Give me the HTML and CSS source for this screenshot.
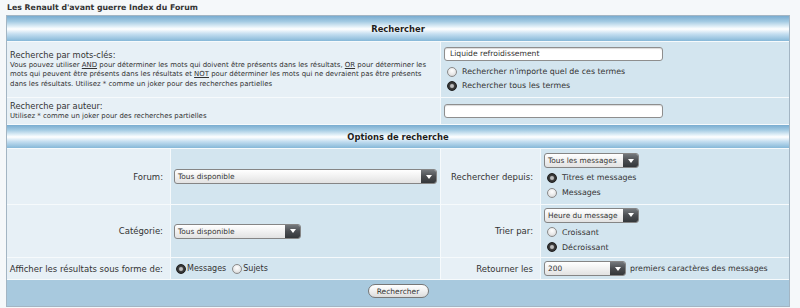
FILE: index.html
```html
<!DOCTYPE html>
<html lang="fr">
<head>
    <meta charset="UTF-8">
    <title>Rechercher</title>
    <link rel="stylesheet" href="styles.css">
</head>
<body>
    <div class="nav">Les Renault d'avant guerre Index du Forum</div>

    <div class="forumline">
        <div class="cat-head first">Rechercher</div>

        <div class="search-grid">
            <div class="cell-label row-keywords">
                <div class="label-title">Recherche par mots-clés:</div>
                <div class="gensmall">Vous pouvez utiliser <u>AND</u> pour déterminer les mots qui doivent être présents dans les résultats, <u>OR</u> pour déterminer les mots qui peuvent être présents dans les résultats et <u>NOT</u> pour déterminer les mots qui ne devraient pas être présents dans les résultats. Utilisez * comme un joker pour des recherches partielles</div>
            </div>
            <div class="cell-field stack">
                <input class="text-input" type="text" value="Liquide refroidissement">
                <label class="choice first-choice"><span class="radio"></span>Rechercher n'importe quel de ces termes</label>
                <label class="choice"><span class="radio on"></span>Rechercher tous les termes</label>
            </div>

            <div class="cell-label row-author">
                <div class="label-title">Recherche par auteur:</div>
                <div class="gensmall">Utilisez * comme un joker pour des recherches partielles</div>
            </div>
            <div class="cell-field">
                <input class="text-input" type="text" value="">
            </div>
        </div>

        <div class="cat-head">Options de recherche</div>

        <div class="options-grid">
            <div class="cell-label right row-forum">Forum:</div>
            <div class="cell-field">
                <span class="select select-forum"><span class="select-text">Tous disponible</span><span class="select-arrow"></span></span>
            </div>
            <div class="cell-label right">Rechercher depuis:</div>
            <div class="cell-field stack loose">
                <span class="select select-small"><span class="select-text">Tous les messages</span><span class="select-arrow"></span></span>
                <label class="choice first-choice"><span class="radio on"></span>Titres et messages</label>
                <label class="choice"><span class="radio"></span>Messages</label>
            </div>

            <div class="cell-label right row-cat">Catégorie:</div>
            <div class="cell-field">
                <span class="select select-cat"><span class="select-text">Tous disponible</span><span class="select-arrow"></span></span>
            </div>
            <div class="cell-label right">Trier par:</div>
            <div class="cell-field stack loose">
                <span class="select select-small"><span class="select-text">Heure du message</span><span class="select-arrow"></span></span>
                <label class="choice first-choice"><span class="radio"></span>Croissant</label>
                <label class="choice"><span class="radio on"></span>Décroissant</label>
            </div>

            <div class="cell-label right row-show">Afficher les résultats sous forme de:</div>
            <div class="cell-field inline">
                <label class="choice tight"><span class="radio on"></span>Messages</label>
                <label class="choice tight"><span class="radio"></span>Sujets</label>
            </div>
            <div class="cell-label right">Retourner les</div>
            <div class="cell-field inline">
                <span class="select select-chars"><span class="select-text">200</span><span class="select-arrow"></span></span>
                <span class="after-select">premiers caractères des messages</span>
            </div>
        </div>

        <div class="cat-bottom">
            <button class="btn" type="button">Rechercher</button>
        </div>
    </div>
</body>
</html>
```

FILE: styles.css
```css
* {
    margin: 0;
    padding: 0;
    box-sizing: border-box;
}

body {
    background: #f5f8fa;
    font-family: 'DejaVu Sans', Verdana, sans-serif;
    color: #333;
    padding: 0 10px 0 6px;
}

.nav {
    height: 15px;
    padding: 3px 0 0 1px;
    font-size: 7.8px;
    line-height: 9px;
    font-weight: bold;
    color: #333;
}

.forumline {
    border: 1px solid #a3b5c3;
    background: #f6fafc;
    display: flex;
    flex-direction: column;
    gap: 1px;
}

.cat-head {
    height: 23px;
    display: flex;
    align-items: center;
    justify-content: center;
    font-size: 8.4px;
    font-weight: bold;
    color: #1d1d1d;
    background: linear-gradient(to bottom, #79acd0 0%, #a4cbe3 22%, #e9f4fa 45%, #ffffff 52%, #c4def0 72%, #86b8d8 100%);
}

.cat-head.first {
    height: 25px;
}

.search-grid,
.options-grid {
    display: grid;
    gap: 1px;
}

.search-grid {
    grid-template-columns: 433px 1fr;
    grid-template-rows: 55px 26px;
}

.options-grid {
    grid-template-columns: 163px 269px 99px 1fr;
    grid-template-rows: 55px 52px 21px;
}

.cell-label {
    background: #e7f0f6;
    padding: 0 2px 0 3px;
    display: flex;
    flex-direction: column;
    justify-content: center;
}

.cell-label.right {
    align-items: flex-end;
    padding-right: 7px;
    font-size: 8.5px;
    white-space: nowrap;
}

.cell-field {
    background: #d3e5ef;
    padding: 0 3px;
    display: flex;
    align-items: center;
}

.cell-field.stack {
    flex-direction: column;
    align-items: flex-start;
    justify-content: center;
}

.cell-field.inline {
    gap: 4px;
}

.label-title {
    font-size: 8.3px;
    line-height: 11px;
}

.gensmall {
    font-size: 6.95px;
    line-height: 9.5px;
}

.text-input {
    width: 219px;
    height: 14px;
    border: 1px solid #8e8e8e;
    border-radius: 3px;
    background: #fff;
    box-shadow: inset 0 1px 1px rgba(0, 0, 0, 0.15);
    font-family: inherit;
    font-size: 7.6px;
    color: #333;
    padding: 0 5px;
    outline: none;
}

.choice {
    display: flex;
    align-items: center;
    height: 14px;
    font-size: 7.9px;
    color: #333;
    padding-left: 3px;
}

.choice.first-choice {
    margin-top: 4px;
}

.loose .choice {
    height: 15px;
}

.loose .choice.first-choice {
    margin-top: 2px;
}

.choice.tight {
    padding-left: 2px;
    font-size: 8px;
}

.choice .radio {
    margin-right: 5px;
}

.choice.tight .radio {
    margin-right: 1px;
}

.radio {
    width: 10px;
    height: 10px;
    border-radius: 50%;
    border: 1px solid #8a8a8a;
    background: radial-gradient(circle at 50% 35%, #ffffff 0%, #e8e8e8 55%, #c9c9c9 100%);
    flex-shrink: 0;
}

.radio.on {
    border-color: #1e1e1e;
    background: radial-gradient(circle at 50% 50%, #d0d0d0 0, #a8a8a8 1.6px, #3a3a3a 2.6px, #2a2a2a 100%);
}

.select {
    display: inline-flex;
    height: 15px;
    border: 1px solid #858585;
    border-radius: 3px;
    background: linear-gradient(to bottom, #ffffff 0%, #f1f1f1 50%, #e2e2e2 100%);
    overflow: hidden;
    font-size: 7.4px;
    color: #333;
}

.select-text {
    flex: 1;
    display: flex;
    align-items: center;
    padding: 0 3px;
    white-space: nowrap;
    overflow: hidden;
}

.select-arrow {
    width: 15px;
    flex-shrink: 0;
    background: linear-gradient(to bottom, #74787c 0%, #4a4d51 50%, #34373a 100%);
    display: flex;
    align-items: center;
    justify-content: center;
}

.select-arrow::after {
    content: "";
    border-left: 3px solid transparent;
    border-right: 3px solid transparent;
    border-top: 4px solid #fff;
}

.select-forum {
    width: 263px;
}

.select-cat {
    width: 127px;
}

.select-small {
    width: 95px;
}

.select-chars {
    width: 82px;
}

.after-select {
    font-size: 7.9px;
}

.cat-bottom {
    height: 26px;
    background: #a8c9de;
    display: flex;
    justify-content: center;
    padding-top: 4px;
}

.btn {
    width: 61px;
    height: 14px;
    border: 1px solid #777;
    border-radius: 7px;
    background: linear-gradient(to bottom, #ffffff 0%, #f0f0f0 50%, #dcdcdc 100%);
    font-family: inherit;
    font-size: 7.5px;
    color: #333;
}
```
